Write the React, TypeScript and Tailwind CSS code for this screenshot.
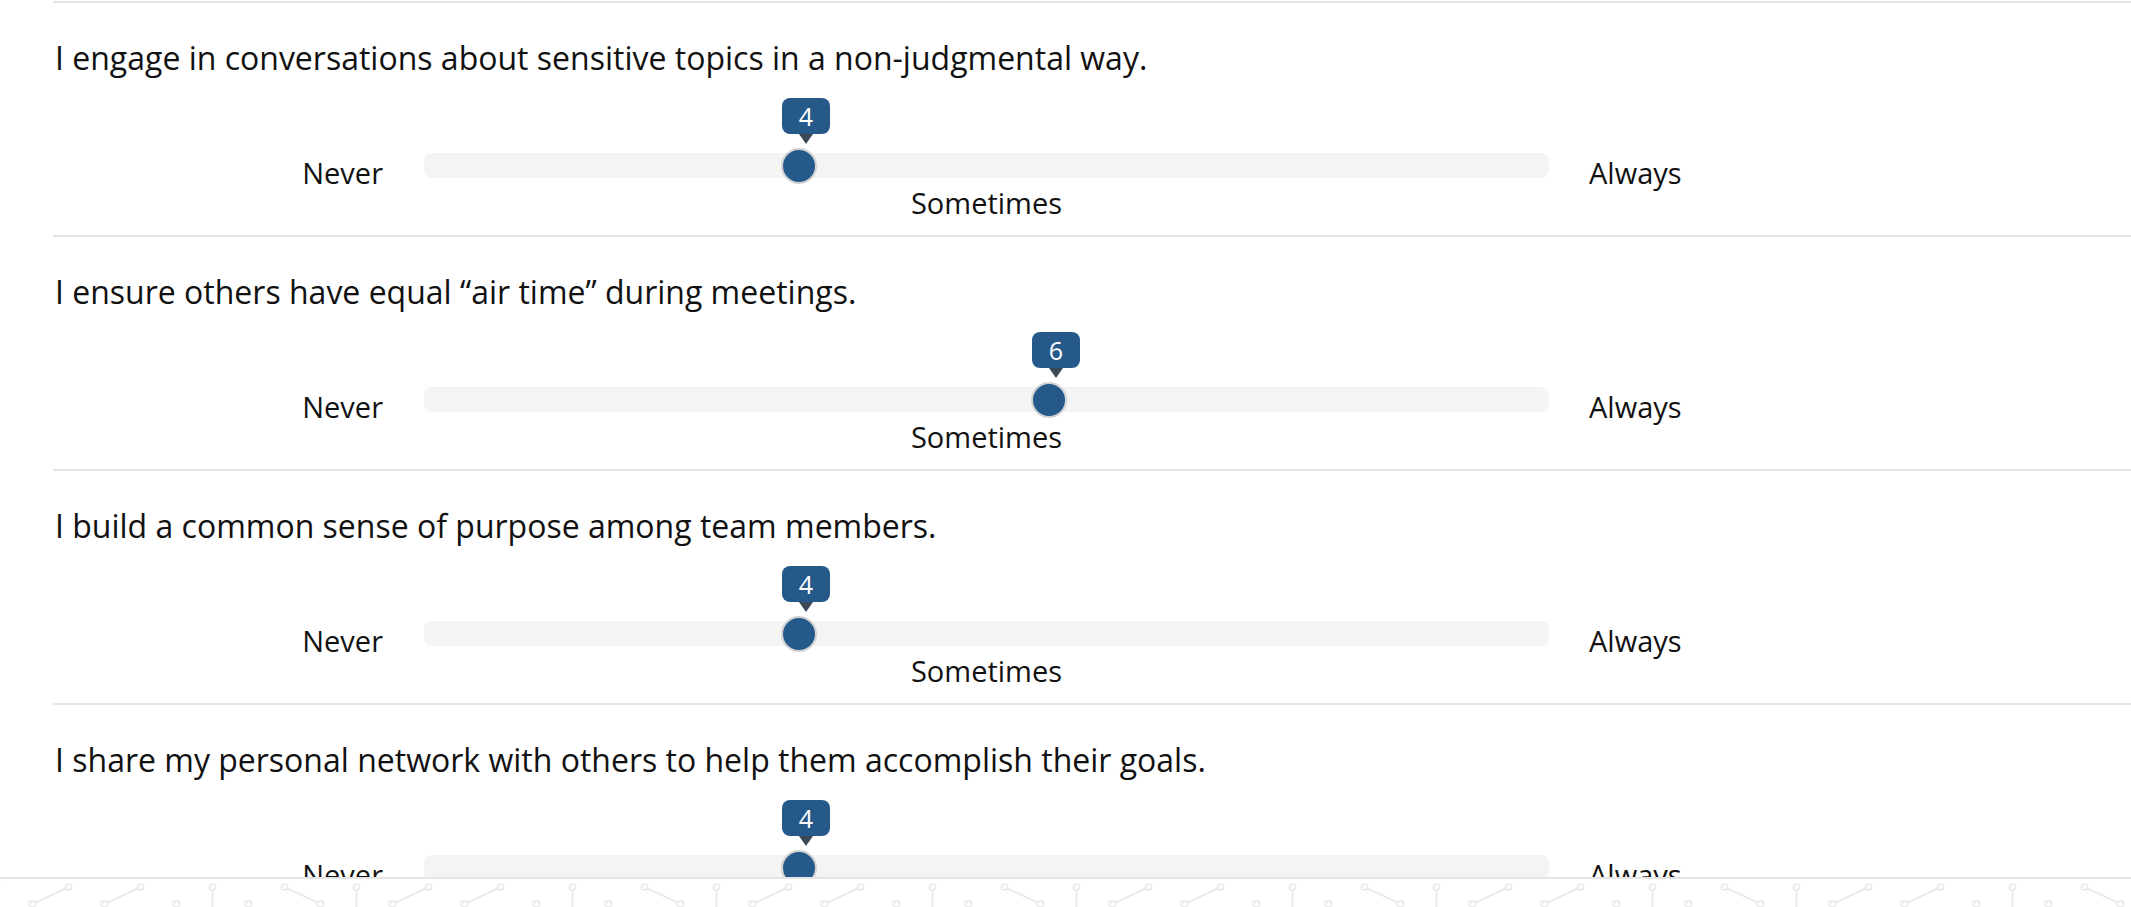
import React from "react";

type Item = { question: string; value: number };

const items: Item[] = [
  { question: "I engage in conversations about sensitive topics in a non-judgmental way.", value: 4 },
  { question: "I ensure others have equal “air time” during meetings.", value: 6 },
  { question: "I build a common sense of purpose among team members.", value: 4 },
  { question: "I share my personal network with others to help them accomplish their goals.", value: 4 },
];

const MIN = 1;
const MAX = 10;

function Slider({ value }: { value: number }) {
  const pct = ((value - MIN) / (MAX - MIN)) * 100;
  return (
    <div className="flex items-start">
      <div className="w-[330px] mt-[2px] text-right text-[29px] leading-[36px]">Never</div>
      <div className="ml-[41px] w-[1125px]">
        <div className="relative h-[25px] rounded-lg bg-[#f4f4f4]">
          <div
            className="absolute top-[-55px] flex -translate-x-1/2 flex-col items-center"
            style={{ left: `calc(${pct}% + 7px)` }}
          >
            <div className="flex h-[36px] w-[48px] items-center justify-center rounded-lg bg-[#25598a] text-[25px] leading-none text-white">
              {value}
            </div>
            <div className="h-0 w-0 border-x-[7px] border-t-[10px] border-x-transparent border-t-[#3b4856]" />
          </div>
          <div
            className="absolute top-1/2 h-[36px] w-[36px] -translate-x-1/2 -translate-y-1/2 rounded-full border-2 border-[#d2d2d2] bg-[#25598a]"
            style={{ left: `${pct}%` }}
          />
        </div>
        <div className="mt-[6px] text-center text-[29px] leading-[38px]">Sometimes</div>
      </div>
      <div className="ml-[40px] mt-[2px] text-[29px] leading-[36px]">Always</div>
    </div>
  );
}

function Question({ item }: { item: Item }) {
  return (
    <div className="h-[234px] shrink-0 border-t-2 border-[#e5e5e5]">
      <p className="pl-[2px] pt-[35px] text-[32px] leading-[40px]">{item.question}</p>
      <div className="mt-[75px]">
        <Slider value={item.value} />
      </div>
    </div>
  );
}

function FooterPattern() {
  const stroke = "#e6e6e6";
  return (
    <svg className="block h-[28px] w-full" xmlns="http://www.w3.org/2000/svg">
      <defs>
        <pattern id="circuit" patternUnits="userSpaceOnUse" x="212.5" y="0" width="360" height="28">
          <g stroke={stroke} strokeWidth="1.5" fill="#fff">
            {/* lines */}
            <line x1="0" y1="8" x2="0" y2="30" />
            <line x1="36" y1="25" x2="36" y2="30" />
            <line x1="72" y1="8" x2="108" y2="25" />
            <line x1="108" y1="25" x2="108" y2="30" />
            <line x1="144" y1="8" x2="144" y2="30" />
            <line x1="180" y1="25" x2="216" y2="8" />
            <line x1="180" y1="25" x2="180" y2="30" />
            <line x1="252" y1="25" x2="288" y2="8" />
            <line x1="252" y1="25" x2="252" y2="30" />
            <line x1="324" y1="25" x2="324" y2="30" />
            <line x1="360" y1="8" x2="360" y2="30" />
            {/* nodes */}
            <circle cx="0" cy="8" r="3" />
            <circle cx="360" cy="8" r="3" />
            <circle cx="36" cy="25" r="3" />
            <circle cx="72" cy="8" r="3" />
            <circle cx="108" cy="25" r="3" />
            <circle cx="144" cy="8" r="3" />
            <circle cx="180" cy="25" r="3" />
            <circle cx="216" cy="8" r="3" />
            <circle cx="252" cy="25" r="3" />
            <circle cx="288" cy="8" r="3" />
            <circle cx="324" cy="25" r="3" />
          </g>
        </pattern>
      </defs>
      <rect width="100%" height="100%" fill="url(#circuit)" />
    </svg>
  );
}

export default function App() {
  return (
    <div className="flex h-[907px] flex-col overflow-hidden bg-white text-[#111] font-['Open_Sans',sans-serif]">
      <div className="flex-1 overflow-hidden pl-[53px] pt-[1px]">
        {items.map((item, i) => (
          <Question key={i} item={item} />
        ))}
      </div>
      <div className="h-[30px] shrink-0 border-t-2 border-[#e4e4e4] bg-white">
        <FooterPattern />
      </div>
    </div>
  );
}
